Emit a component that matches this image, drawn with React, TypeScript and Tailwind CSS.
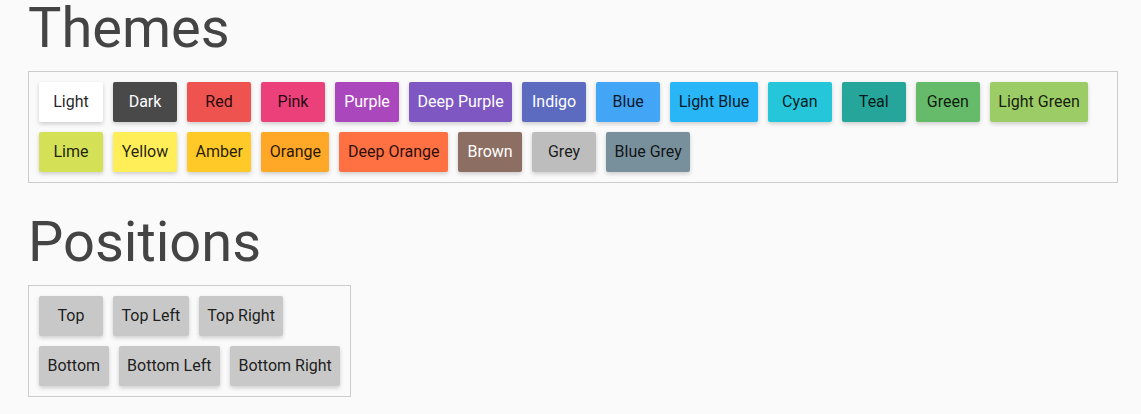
const themes: { label: string; bg: string; text: string }[] = [
  { label: "Light", bg: "bg-white", text: "text-black/87" },
  { label: "Dark", bg: "bg-[#494949]", text: "text-white" },
  { label: "Red", bg: "bg-[#ef5350]", text: "text-black/87" },
  { label: "Pink", bg: "bg-[#ec407a]", text: "text-black/87" },
  { label: "Purple", bg: "bg-[#ab47bc]", text: "text-white" },
  { label: "Deep Purple", bg: "bg-[#7e57c2]", text: "text-white" },
  { label: "Indigo", bg: "bg-[#5c6bc0]", text: "text-white" },
  { label: "Blue", bg: "bg-[#42a5f5]", text: "text-black/87" },
  { label: "Light Blue", bg: "bg-[#29b6f6]", text: "text-black/87" },
  { label: "Cyan", bg: "bg-[#26c6da]", text: "text-black/87" },
  { label: "Teal", bg: "bg-[#26a69a]", text: "text-black/87" },
  { label: "Green", bg: "bg-[#66bb6a]", text: "text-black/87" },
  { label: "Light Green", bg: "bg-[#9ccc65]", text: "text-black/87" },
  { label: "Lime", bg: "bg-[#d4e157]", text: "text-black/87" },
  { label: "Yellow", bg: "bg-[#ffee58]", text: "text-black/87" },
  { label: "Amber", bg: "bg-[#ffca28]", text: "text-black/87" },
  { label: "Orange", bg: "bg-[#ffa726]", text: "text-black/87" },
  { label: "Deep Orange", bg: "bg-[#ff7043]", text: "text-black/87" },
  { label: "Brown", bg: "bg-[#8d6e63]", text: "text-white" },
  { label: "Grey", bg: "bg-[#bdbdbd]", text: "text-black/87" },
  { label: "Blue Grey", bg: "bg-[#78909c]", text: "text-black/87" },
];

const positionRows = [
  ["Top", "Top Left", "Top Right"],
  ["Bottom", "Bottom Left", "Bottom Right"],
];

function Btn({ label, bg, text }: { label: string; bg: string; text: string }) {
  return (
    <button
      className={`h-10 min-w-16 px-[8.5px] rounded-[2px] text-base flex items-center justify-center shadow-[0_2px_4px_rgba(0,0,0,0.18)] ${bg} ${text}`}
    >
      {label}
    </button>
  );
}

export default function App() {
  return (
    <div className="min-h-[414px] bg-[#fafafa] pl-[28px] pr-[23px] font-['Roboto',sans-serif]">
      <h1 className="text-[56px] leading-[56px] font-normal text-[#444] mb-[15px]">Themes</h1>
      <div className="flex flex-wrap gap-[10px] p-[10px] border border-[#ccc]">
        {themes.map((t) => (
          <Btn key={t.label} {...t} />
        ))}
      </div>

      <h1 className="mt-[31px] text-[56px] leading-[56px] font-normal text-[#444] mb-[15px]">Positions</h1>
      <div className="flex w-fit flex-col gap-[10px] p-[10px] border border-[#ccc]">
        {positionRows.map((row, i) => (
          <div key={i} className="flex gap-[10px]">
            {row.map((p) => (
              <Btn key={p} label={p} bg="bg-[#c8c8c8]" text="text-black/87" />
            ))}
          </div>
        ))}
      </div>
    </div>
  );
}
